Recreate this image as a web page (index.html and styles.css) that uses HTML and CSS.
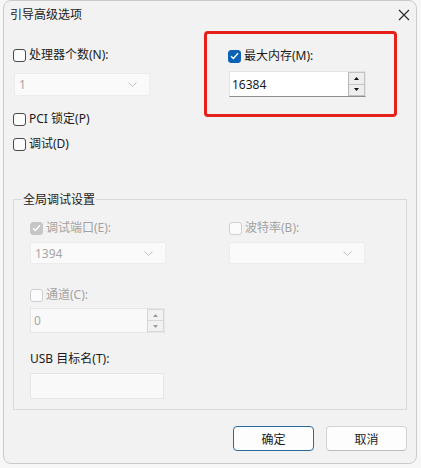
FILE: index.html
```html
<!DOCTYPE html>
<html lang="zh-CN">
<head>
<meta charset="utf-8">
<title>引导高级选项</title>
<link rel="stylesheet" href="styles.css">
</head>
<body>
<div class="dialog">
  <div class="titlebar">
    <span class="title">引导高级选项</span>
    <svg class="close" width="12" height="12" viewBox="0 0 12 12"><path d="M1 1 L11 11 M11 1 L1 11" stroke="#2b2b2b" stroke-width="1.2" fill="none"/></svg>
  </div>

  <div class="top">
    <div class="left-col">
      <label class="check-row first">
        <span class="cb"></span><span>处理器个数(N):</span>
      </label>
      <div class="select disabled sel-cpu"><span>1</span><svg class="chev" width="9" height="5" viewBox="0 0 9 5"><polyline points="0.5,0.5 4.5,4.5 8.5,0.5" fill="none" stroke="#c2c2c2" stroke-width="1"/></svg></div>
      <label class="check-row pci">
        <span class="cb"></span><span>PCI 锁定(P)</span>
      </label>
      <label class="check-row dbg">
        <span class="cb"></span><span>调试(D)</span>
      </label>
    </div>

    <div class="highlight">
      <label class="check-row">
        <span class="cb checked"><svg width="9" height="8" viewBox="0 0 9 8"><polyline points="1,4.2 3.4,6.5 8,1.3" fill="none" stroke="#fff" stroke-width="1.3"/></svg></span><span>最大内存(M):</span>
      </label>
      <div class="spin-input mem">
        <span class="value">16384</span>
        <div class="spinner">
          <span class="up"><svg width="5" height="3" viewBox="0 0 5 3"><polygon points="2.5,0 5,3 0,3" fill="#111"/></svg></span>
          <span class="down"><svg width="5" height="3" viewBox="0 0 5 3"><polygon points="0,0 5,0 2.5,3" fill="#111"/></svg></span>
        </div>
      </div>
    </div>
  </div>

  <div class="group">
    <div class="group-head"><span class="legend">全局调试设置</span></div>
    <div class="group-body">
      <div class="grid2">
        <label class="check-row dis">
          <span class="cb dis-checked"><svg width="9" height="8" viewBox="0 0 9 8"><polyline points="1,4.2 3.4,6.5 8,1.3" fill="none" stroke="#fff" stroke-width="1.3"/></svg></span><span>调试端口(E):</span>
        </label>
        <label class="check-row dis">
          <span class="cb dis-cb"></span><span>波特率(B):</span>
        </label>
        <div class="select disabled sel-grp"><span>1394</span><svg class="chev" width="9" height="5" viewBox="0 0 9 5"><polyline points="0.5,0.5 4.5,4.5 8.5,0.5" fill="none" stroke="#c2c2c2" stroke-width="1"/></svg></div>
        <div class="select disabled sel-grp"><span></span><svg class="chev" width="9" height="5" viewBox="0 0 9 5"><polyline points="0.5,0.5 4.5,4.5 8.5,0.5" fill="none" stroke="#c2c2c2" stroke-width="1"/></svg></div>
      </div>

      <label class="check-row dis chan">
        <span class="cb dis-cb"></span><span>通道(C):</span>
      </label>
      <div class="spin-input dis-input chan-input">
        <span class="value">0</span>
        <div class="spinner dis-spin">
          <span class="up"><svg width="5" height="3" viewBox="0 0 5 3"><polygon points="2.5,0 5,3 0,3" fill="#9a9a9a"/></svg></span>
          <span class="down"><svg width="5" height="3" viewBox="0 0 5 3"><polygon points="0,0 5,0 2.5,3" fill="#9a9a9a"/></svg></span>
        </div>
      </div>

      <div class="usb-label">USB 目标名(T):</div>
      <div class="text-input dis-input usb-input"></div>
    </div>
  </div>

  <div class="buttons">
    <button class="btn default">确定</button>
    <button class="btn">取消</button>
  </div>
</div>
</body>
</html>
```

FILE: styles.css
```css
* { box-sizing: border-box; }

body {
  margin: 0;
  width: 421px;
  height: 468px;
  overflow: hidden;
  background: #f7f7f7;
  font-family: "Noto Sans", "Noto Sans CJK SC", sans-serif;
  font-size: 12px;
  color: #1b1b1b;
}

.dialog {
  margin-left: 3px;
  width: 414px;
  height: 464px;
  background: #f2f2f2;
  border: 1px solid #cbcbcb;
  border-radius: 8px;
  display: flex;
  flex-direction: column;
}

.titlebar {
  height: 30px;
  display: flex;
  align-items: center;
  justify-content: space-between;
  padding: 0 6px 2px 6px;
  flex-shrink: 0;
}
.title { line-height: 16px; color: #1a1a1a; }

.top {
  display: flex;
  padding-left: 9px;
  height: 121px;
  flex-shrink: 0;
}
.left-col { width: 191px; }

.check-row {
  display: flex;
  align-items: center;
  gap: 3px;
  height: 16px;
  line-height: 16px;
  white-space: nowrap;
}
.check-row.first { margin-top: 16px; }
.check-row.pci { margin-top: 15px; }
.check-row.dbg { margin-top: 9px; }

.cb {
  width: 13px;
  height: 13px;
  border: 1px solid #4a4a4a;
  border-radius: 3px;
  background: #fbfbfb;
  flex-shrink: 0;
  display: flex;
  align-items: center;
  justify-content: center;
}
.cb.checked { background: #0a62b5; border-color: #0a62b5; }
.cb.dis-checked { background: #c6c6c6; border-color: #c6c6c6; }
.cb.dis-cb { border-color: #cfcfcf; background: #fbfbfb; }
.check-row.dis { color: #a2a2a2; }

.select {
  display: flex;
  align-items: center;
  justify-content: space-between;
  height: 23px;
  background: #fafafa;
  border: 1px solid #ededed;
  border-radius: 2px;
  padding: 0 12px 0 4px;
  color: #a6a6a6;
}
.sel-cpu { width: 136px; margin: 10px 0 0 1px; }

.highlight {
  width: 193px;
  height: 86px;
  border: 3px solid #e6201b;
  border-radius: 4px;
  padding: 14px 0 0 21px;
}

.spin-input {
  display: flex;
  align-items: stretch;
  height: 26px;
  background: #ffffff;
  border: 1px solid #e3e3e3;
  border-bottom-color: #8e8e8e;
}
.spin-input .value {
  flex: 1;
  display: flex;
  align-items: center;
  padding-left: 2px;
}
.mem { width: 137px; margin: 7px 0 0 1px; }

.spinner {
  width: 17px;
  display: flex;
  flex-direction: column;
  border-left: 1px solid #b8b8b8;
}
.spinner span {
  flex: 1;
  display: flex;
  align-items: center;
  justify-content: center;
  background: #eeeeee;
  border: 1px solid #c4c4c4;
  border-left: none;
}
.spinner .up { border-bottom: none; }

.group {
  margin: 40px 9px 0 9px;
  flex-shrink: 0;
}
.group-head {
  display: flex;
  height: 16px;
  line-height: 16px;
}
.group-head::before {
  content: "";
  width: 8px;
  height: 8px;
  align-self: flex-end;
  border-top: 1px solid #dadada;
  border-left: 1px solid #dadada;
}
.group-head::after {
  content: "";
  flex: 1;
  height: 8px;
  align-self: flex-end;
  border-top: 1px solid #dadada;
  border-right: 1px solid #dadada;
}
.legend { padding: 0 1px; color: #1b1b1b; }

.group-body {
  height: 202px;
  border: 1px solid #dadada;
  border-top: none;
  padding: 12px 0 0 16px;
}
.grid2 {
  display: grid;
  grid-template-columns: 199px 136px;
  row-gap: 6px;
}
.sel-grp { width: 136px; height: 22px; }

.chan { margin-top: 23px; }
.dis-input {
  background: #f9f9f9;
  border: 1px solid #e6e6e6;
  color: #a6a6a6;
}
.chan-input { width: 135px; height: 25px; margin-top: 5px; }
.chan-input .value { padding-left: 3px; }
.dis-spin { border-left-color: #d6d6d6; }
.dis-spin span { background: #f2f2f2; border-color: #d8d8d8; }

.usb-label { margin-top: 18px; line-height: 16px; }
.usb-input { width: 134px; height: 26px; margin-top: 6px; }

.buttons {
  display: flex;
  justify-content: flex-end;
  gap: 12px;
  padding-right: 9px;
  margin-top: 16px;
}
.btn {
  width: 81px;
  height: 25px;
  font-family: "Noto Sans", "Noto Sans CJK SC", sans-serif;
  font-size: 12px;
  color: #1b1b1b;
  background: #fdfdfd;
  border: 1px solid #d3d3d3;
  border-bottom-color: #bdbdbd;
  border-radius: 4px;
  padding: 0;
}
.btn.default { border: 1px solid #2a6a9e; }
```
